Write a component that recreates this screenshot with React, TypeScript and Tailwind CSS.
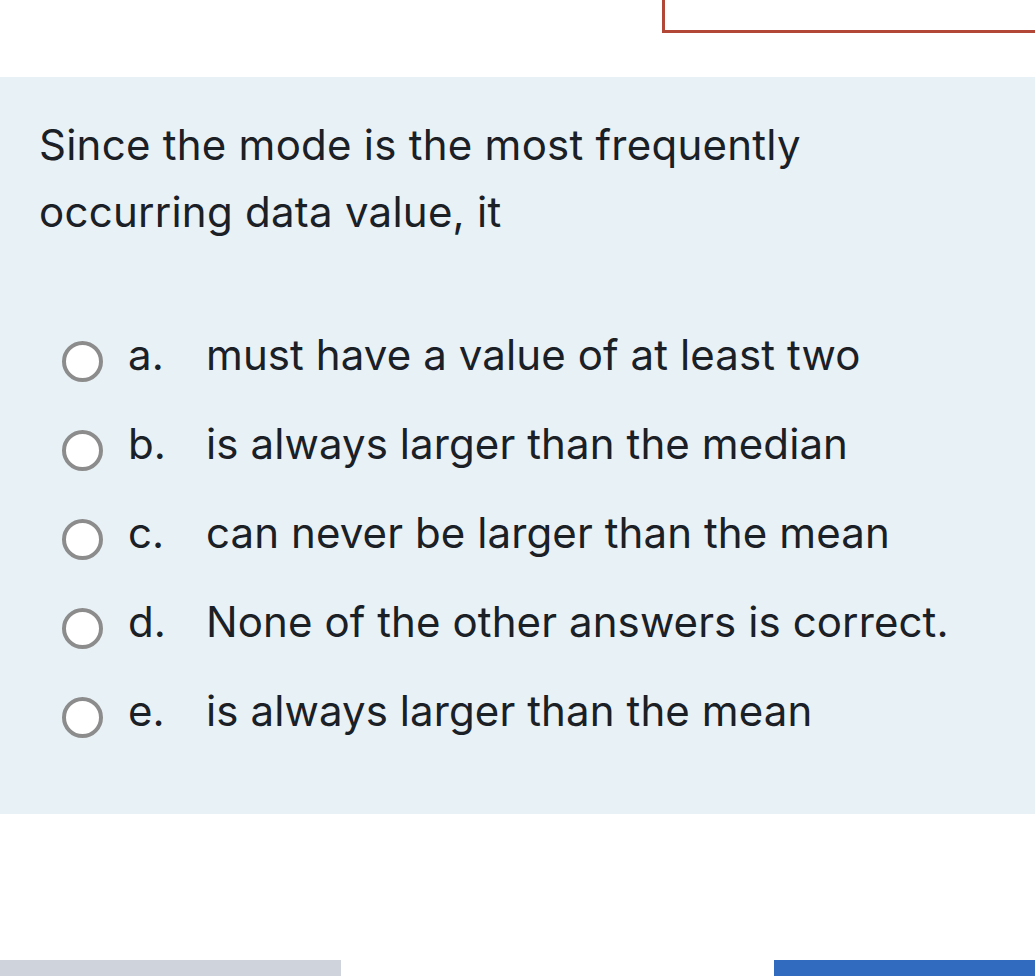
const OPTIONS = [
  { key: 'a.', text: 'must have a value of at least two' },
  { key: 'b.', text: 'is always larger than the median' },
  { key: 'c.', text: 'can never be larger than the mean' },
  { key: 'd.', text: 'None of the other answers is correct.' },
  { key: 'e.', text: 'is always larger than the mean' },
];

export default function App() {
  return (
    <div
      className="h-[976px] w-[1035px] overflow-hidden bg-white flex flex-col text-[#1a2025]"
      style={{ fontFamily: 'Inter, "Open Sans", sans-serif' }}
    >
      {/* top box (cut off) */}
      <div className="h-[77px] shrink-0">
        <div className="ml-[662px] h-[33px] border-l-[3px] border-b-[3px] border-[#b24637]" />
      </div>

      {/* question panel */}
      <div className="h-[737px] shrink-0 bg-[#e8f1f5] pl-[39px] pt-[34px]">
        <p className="text-[42px] leading-[67px] tracking-[0.25px]">
          Since the mode is the most frequently
          <br />
          occurring data value, it
        </p>
        <div className="mt-[72px] flex flex-col">
          {OPTIONS.map((o) => (
            <label key={o.key} className="h-[89px] flex items-center">
              <span className="ml-[23px] w-[41px] h-[41px] rounded-full border-[4px] border-[#8c8c8c] bg-white shrink-0" />
              <span className="ml-[25px] flex items-center -mt-[14px] text-[42px] leading-none tracking-[0.1px]">
                <span className="w-[78px]">{o.key}</span>
                <span>{o.text}</span>
              </span>
            </label>
          ))}
        </div>
      </div>

      {/* bottom buttons (cut off) */}
      <div className="mt-[146px] flex justify-between">
        <div className="w-[341px] h-[60px] bg-[#cfd3db]" />
        <div className="w-[261px] h-[60px] bg-[#316bbf]" />
      </div>
    </div>
  );
}
